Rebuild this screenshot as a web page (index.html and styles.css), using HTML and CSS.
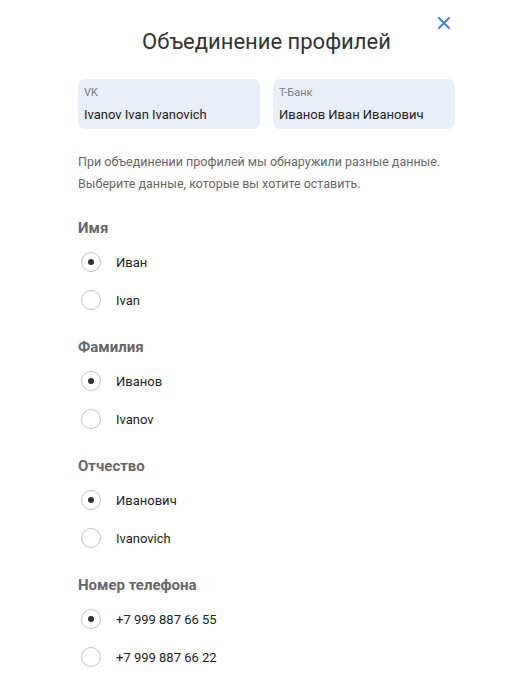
FILE: index.html
```html
<!DOCTYPE html>
<html lang="ru">

<head>
  <meta charset="UTF-8">
  <meta name="viewport" content="width=device-width, initial-scale=1.0">
  <title>Объединение профилей</title>
  <link rel="stylesheet" href="styles.css">
</head>

<body>
  <div class="merge-dialog">
    <button class="close-button" aria-label="Закрыть">
      <svg viewBox="0 0 12 12" width="12" height="12">
        <path d="M1 1L11 11M11 1L1 11" stroke="currentColor" stroke-width="2.2" stroke-linecap="round" />
      </svg>
    </button>

    <h1 class="dialog-title">Объединение профилей</h1>

    <div class="sources">
      <div class="source-card">
        <span class="source-name">VK</span>
        <span class="source-value">Ivanov Ivan Ivanovich</span>
      </div>
      <div class="source-card">
        <span class="source-name">Т-Банк</span>
        <span class="source-value">Иванов Иван Иванович</span>
      </div>
    </div>

    <p class="dialog-description">
      При объединении профилей мы обнаружили разные данные.<br>
      Выберите данные, которые вы хотите оставить.
    </p>

    <div class="field-group" role="radiogroup">
      <h2 class="field-title">Имя</h2>
      <label class="option"><input type="radio" name="first" checked><span class="radio"></span>Иван</label>
      <label class="option"><input type="radio" name="first"><span class="radio"></span>Ivan</label>
    </div>

    <div class="field-group" role="radiogroup">
      <h2 class="field-title">Фамилия</h2>
      <label class="option"><input type="radio" name="last" checked><span class="radio"></span>Иванов</label>
      <label class="option"><input type="radio" name="last"><span class="radio"></span>Ivanov</label>
    </div>

    <div class="field-group" role="radiogroup">
      <h2 class="field-title">Отчество</h2>
      <label class="option"><input type="radio" name="middle" checked><span class="radio"></span>Иванович</label>
      <label class="option"><input type="radio" name="middle"><span class="radio"></span>Ivanovich</label>
    </div>

    <div class="field-group" role="radiogroup">
      <h2 class="field-title">Номер телефона</h2>
      <label class="option"><input type="radio" name="phone" checked><span class="radio"></span>+7 999 887 66 55</label>
      <label class="option"><input type="radio" name="phone"><span class="radio"></span>+7 999 887 66 22</label>
    </div>
  </div>
</body>

</html>
```

FILE: styles.css
```css
:root {
  --text: #222222;
  --title: #333333;
  --text-secondary: #666666;
  --muted: #7a7a7a;
  --card: #e9eff9;
  --accent: #4a86d9;
  --radio-border: #c2c2c2;
}

* {
  box-sizing: border-box;
  margin: 0;
  padding: 0;
}

body {
  font-family: Roboto, "Liberation Sans", Arial, sans-serif;
  background: #ffffff;
  color: var(--text);
}

.merge-dialog {
  position: relative;
  padding: 28px 75px 0 78px;
}

.close-button {
  position: absolute;
  top: 16px;
  left: 437px;
  width: 14px;
  height: 14px;
  border: none;
  background: none;
  color: var(--accent);
  display: flex;
  align-items: center;
  justify-content: center;
  cursor: pointer;
}

.dialog-title {
  font-size: 22px;
  font-weight: 400;
  line-height: 28px;
  text-align: center;
  color: var(--title);
}

.sources {
  margin-top: 23px;
  display: grid;
  grid-template-columns: 1fr 1fr;
  gap: 13px;
}

.source-card {
  background: var(--card);
  border-radius: 7px;
  height: 50px;
  padding: 6px 6px 0;
  display: flex;
  flex-direction: column;
}

.source-name {
  font-size: 11px;
  line-height: 16px;
  color: var(--muted);
}

.source-value {
  margin-top: 5px;
  font-size: 13px;
  line-height: 18px;
  color: var(--text);
}

.dialog-description {
  margin-top: 22px;
  font-size: 12.5px;
  line-height: 22px;
  color: var(--text-secondary);
}

.field-group {
  margin-top: 23px;
}

.field-group + .field-group {
  margin-top: 18px;
}

.field-title {
  font-size: 15px;
  font-weight: 700;
  line-height: 20px;
  color: var(--text-secondary);
  margin-bottom: 5px;
}

.option {
  display: flex;
  align-items: center;
  gap: 15px;
  height: 38px;
  padding-left: 3px;
  font-size: 13px;
  color: var(--text);
  cursor: pointer;
}

.option input {
  display: none;
}

.radio {
  width: 20px;
  height: 20px;
  border-radius: 50%;
  border: 1.5px solid var(--radio-border);
  display: flex;
  align-items: center;
  justify-content: center;
}

.option input:checked + .radio::after {
  content: '';
  width: 6px;
  height: 6px;
  border-radius: 50%;
  background: #333333;
}
```
